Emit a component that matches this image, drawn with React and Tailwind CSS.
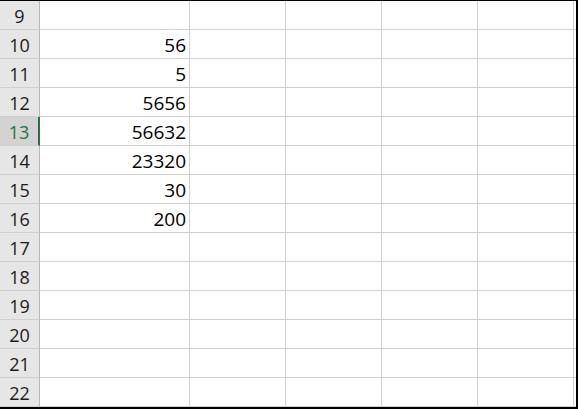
import React from "react";

const rows = [
  { n: 9, v: "" },
  { n: 10, v: "56" },
  { n: 11, v: "5" },
  { n: 12, v: "5656" },
  { n: 13, v: "56632", active: true },
  { n: 14, v: "23320" },
  { n: 15, v: "30" },
  { n: 16, v: "200" },
  { n: 17, v: "" },
  { n: 18, v: "" },
  { n: 19, v: "" },
  { n: 20, v: "" },
  { n: 21, v: "" },
  { n: 22, v: "" },
];

export default function App() {
  return (
    <div
      className="w-[578px] h-[409px] bg-white border-t border-r-2 border-b-2 border-black overflow-hidden text-black"
      style={{ fontFamily: '"Open Sans", "Noto Sans", sans-serif' }}
    >
      {rows.map((r) => (
        <div key={r.n} className="flex h-[29px]">
          <div
            className={`w-[40px] shrink-0 flex items-center justify-center pt-[2px] text-[18px] border-b border-[#cfcfcf] ${
              r.active
                ? "bg-[#d3d3d3] text-[#217346] border-r-2 border-r-[#217346]"
                : "bg-[#e6e6e6] text-[#1b1b1b] border-r border-r-[#b8b8b8]"
            }`}
          >
            {r.n}
          </div>
          <div className="w-[150px] shrink-0 flex items-center justify-end pr-[3px] pt-[2px] text-[19px] border-b border-r border-[#d0d0d0]">
            {r.v}
          </div>
          <div className="w-[96px] shrink-0 border-b border-r border-[#d0d0d0]" />
          <div className="w-[96px] shrink-0 border-b border-r border-[#d0d0d0]" />
          <div className="w-[96px] shrink-0 border-b border-r border-[#d0d0d0]" />
          <div className="w-[96px] shrink-0 border-b border-r border-[#d0d0d0]" />
          <div className="flex-1 border-b border-[#d0d0d0]" />
        </div>
      ))}
    </div>
  );
}
